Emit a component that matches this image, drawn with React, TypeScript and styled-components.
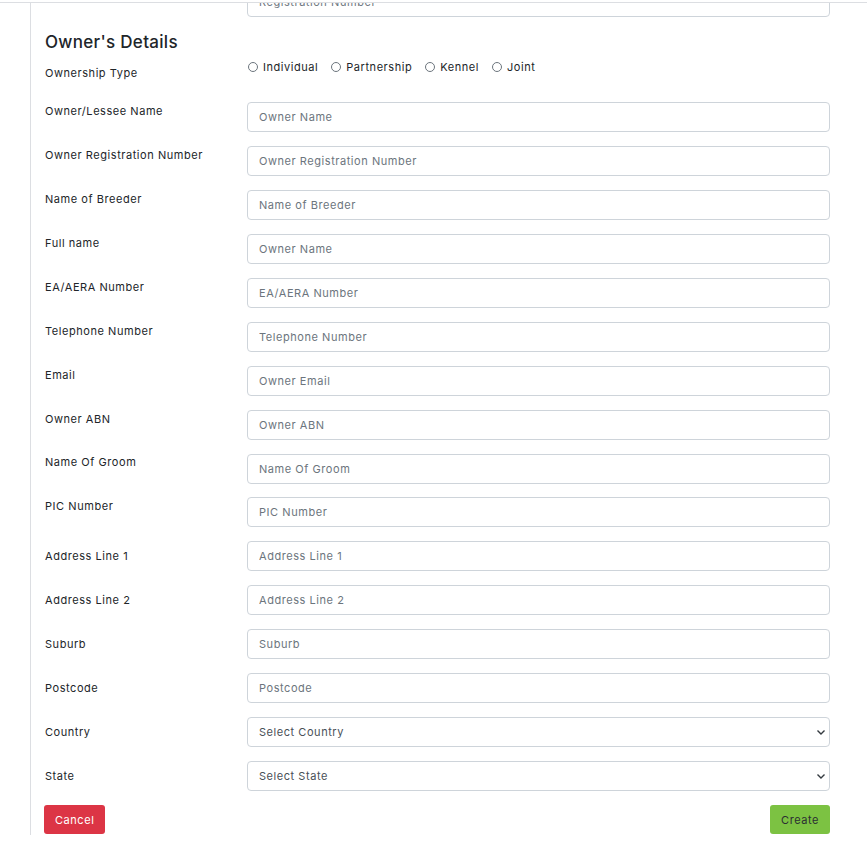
import React, { useState } from "react";
import styled, { createGlobalStyle } from "styled-components";

const GlobalStyle = createGlobalStyle`
  html, body {
    margin: 0;
    padding: 0;
    background: #fff;
  }
  body {
    font-family: Inter, "Open Sans", "Liberation Sans", sans-serif;
    color: #212529;
    letter-spacing: 0.55px;
  }
`;

const Frame = styled.div`
  margin-top: 2px;
  border-top: 1px solid #dcdee2;
  height: 863px;
  overflow: hidden;
`;

const Panel = styled.div`
  margin-left: 30px;
  border-left: 1px solid #dcdee2;
  height: 832px;
  overflow: hidden;
  padding: 0 37px 0 14px;
  box-sizing: border-box;
`;

const Form = styled.form`
  margin-top: -16px;
  display: flex;
  flex-direction: column;
`;

const Row = styled.div<{ $tall?: boolean; $gap?: number }>`
  display: grid;
  grid-template-columns: 202px 1fr;
  align-items: start;
  margin-bottom: ${(p) => p.$gap ?? 14}px;
  min-height: ${(p) => (p.$tall ? "28px" : "30px")};
`;

const Label = styled.label<{ $offset?: number }>`
  font-size: 11px;
  line-height: 16px;
  padding-top: ${(p) => p.$offset ?? 1}px;
  color: #212529;
  font-weight: 400;
`;

const Heading = styled.h3`
  margin: 1px 0 8px;
  font-size: 17px;
  line-height: 20px;
  font-weight: 500;
  letter-spacing: 0.3px;
  color: #212529;
`;

const Input = styled.input`
  box-sizing: border-box;
  width: 100%;
  height: 30px;
  border: 1px solid #ced4da;
  border-radius: 4px;
  padding: 0 11px;
  font-family: inherit;
  font-size: 11px;
  letter-spacing: 0.55px;
  color: #212529;
  outline: none;

  &::placeholder {
    color: #6c757d;
  }
`;

const SelectWrap = styled.div`
  position: relative;
`;

const Select = styled.select`
  box-sizing: border-box;
  width: 100%;
  height: 30px;
  border: 1px solid #ced4da;
  border-radius: 4px;
  padding: 0 11px;
  font-family: inherit;
  font-size: 11px;
  letter-spacing: 0.55px;
  color: #495057;
  background: #fff;
  appearance: none;
  outline: none;
`;

const Chevron = styled.svg`
  position: absolute;
  right: 4px;
  top: 11px;
  pointer-events: none;
`;

const RadioGroup = styled.div`
  display: flex;
  align-items: center;
  gap: 13px;
  height: 14px;
  padding-left: 1px;
`;

const RadioOption = styled.label`
  display: flex;
  align-items: center;
  gap: 5px;
  font-size: 11px;
  line-height: 14px;
  color: #212529;
  cursor: pointer;
`;

const Radio = styled.input`
  appearance: none;
  margin: 0;
  width: 10px;
  height: 10px;
  border: 1px solid #6c757d;
  border-radius: 50%;
  box-sizing: border-box;

  &:checked {
    background: radial-gradient(circle, #212529 35%, transparent 40%);
  }
`;

const Actions = styled.div`
  display: flex;
  justify-content: space-between;
  align-items: center;
  margin-left: -1px;
`;

const Button = styled.button<{ $variant: "danger" | "success" }>`
  height: 29px;
  padding: 0 11px;
  border: none;
  border-radius: 3px;
  font-family: inherit;
  font-size: 11px;
  letter-spacing: 0.55px;
  cursor: pointer;
  background: ${(p) => (p.$variant === "danger" ? "#dc3545" : "#7cc242")};
  color: ${(p) => (p.$variant === "danger" ? "#fff" : "#2b2f33")};
`;

// [label, placeholder, label offset, gap below]
const fields: [string, string, number, number][] = [
  ["Owner/Lessee Name", "Owner Name", 1, 14],
  ["Owner Registration Number", "Owner Registration Number", 1, 14],
  ["Name of Breeder", "Name of Breeder", 1, 14],
  ["Full name", "Owner Name", 1, 14],
  ["EA/AERA Number", "EA/AERA Number", 1, 14],
  ["Telephone Number", "Telephone Number", 1, 14],
  ["Email", "Owner Email", 1, 14],
  ["Owner ABN", "Owner ABN", 1, 14],
  ["Name Of Groom", "Name Of Groom", 0, 13],
  ["PIC Number", "PIC Number", 1, 14],
  ["Address Line 1", "Address Line 1", 7, 14],
  ["Address Line 2", "Address Line 2", 7, 14],
  ["Suburb", "Suburb", 7, 14],
  ["Postcode", "Postcode", 7, 14],
];

const ownershipTypes = ["Individual", "Partnership", "Kennel", "Joint"];

const ChevronDown = () => (
  <Chevron width="10" height="8" viewBox="0 0 10 8">
    <path d="M1.5 2.5 L5 6 L8.5 2.5" fill="none" stroke="#343a40" strokeWidth="1.4" />
  </Chevron>
);

const App: React.FC = () => {
  const [ownership, setOwnership] = useState("");

  return (
    <>
      <GlobalStyle />
      <Frame>
        <Panel>
          <Form onSubmit={(e) => e.preventDefault()}>
            <Row>
              <Label>Registration Number</Label>
              <Input placeholder="Registration Number" />
            </Row>

            <Heading>Owner's Details</Heading>

            <Row $tall>
              <Label $offset={5}>Ownership Type</Label>
              <RadioGroup>
                {ownershipTypes.map((t) => (
                  <RadioOption key={t}>
                    <Radio
                      type="radio"
                      name="ownership"
                      checked={ownership === t}
                      onChange={() => setOwnership(t)}
                    />
                    {t}
                  </RadioOption>
                ))}
              </RadioGroup>
            </Row>

            {fields.map(([label, placeholder, offset, gap], i) => (
              <Row key={i} $gap={gap}>
                <Label $offset={offset}>{label}</Label>
                <Input placeholder={placeholder} />
              </Row>
            ))}

            <Row>
              <Label $offset={7}>Country</Label>
              <SelectWrap>
                <Select defaultValue="">
                  <option value="">Select Country</option>
                </Select>
                <ChevronDown />
              </SelectWrap>
            </Row>

            <Row>
              <Label $offset={7}>State</Label>
              <SelectWrap>
                <Select defaultValue="">
                  <option value="">Select State</option>
                </Select>
                <ChevronDown />
              </SelectWrap>
            </Row>

            <Actions>
              <Button type="button" $variant="danger">
                Cancel
              </Button>
              <Button type="submit" $variant="success">
                Create
              </Button>
            </Actions>
          </Form>
        </Panel>
      </Frame>
    </>
  );
};

export default App;
